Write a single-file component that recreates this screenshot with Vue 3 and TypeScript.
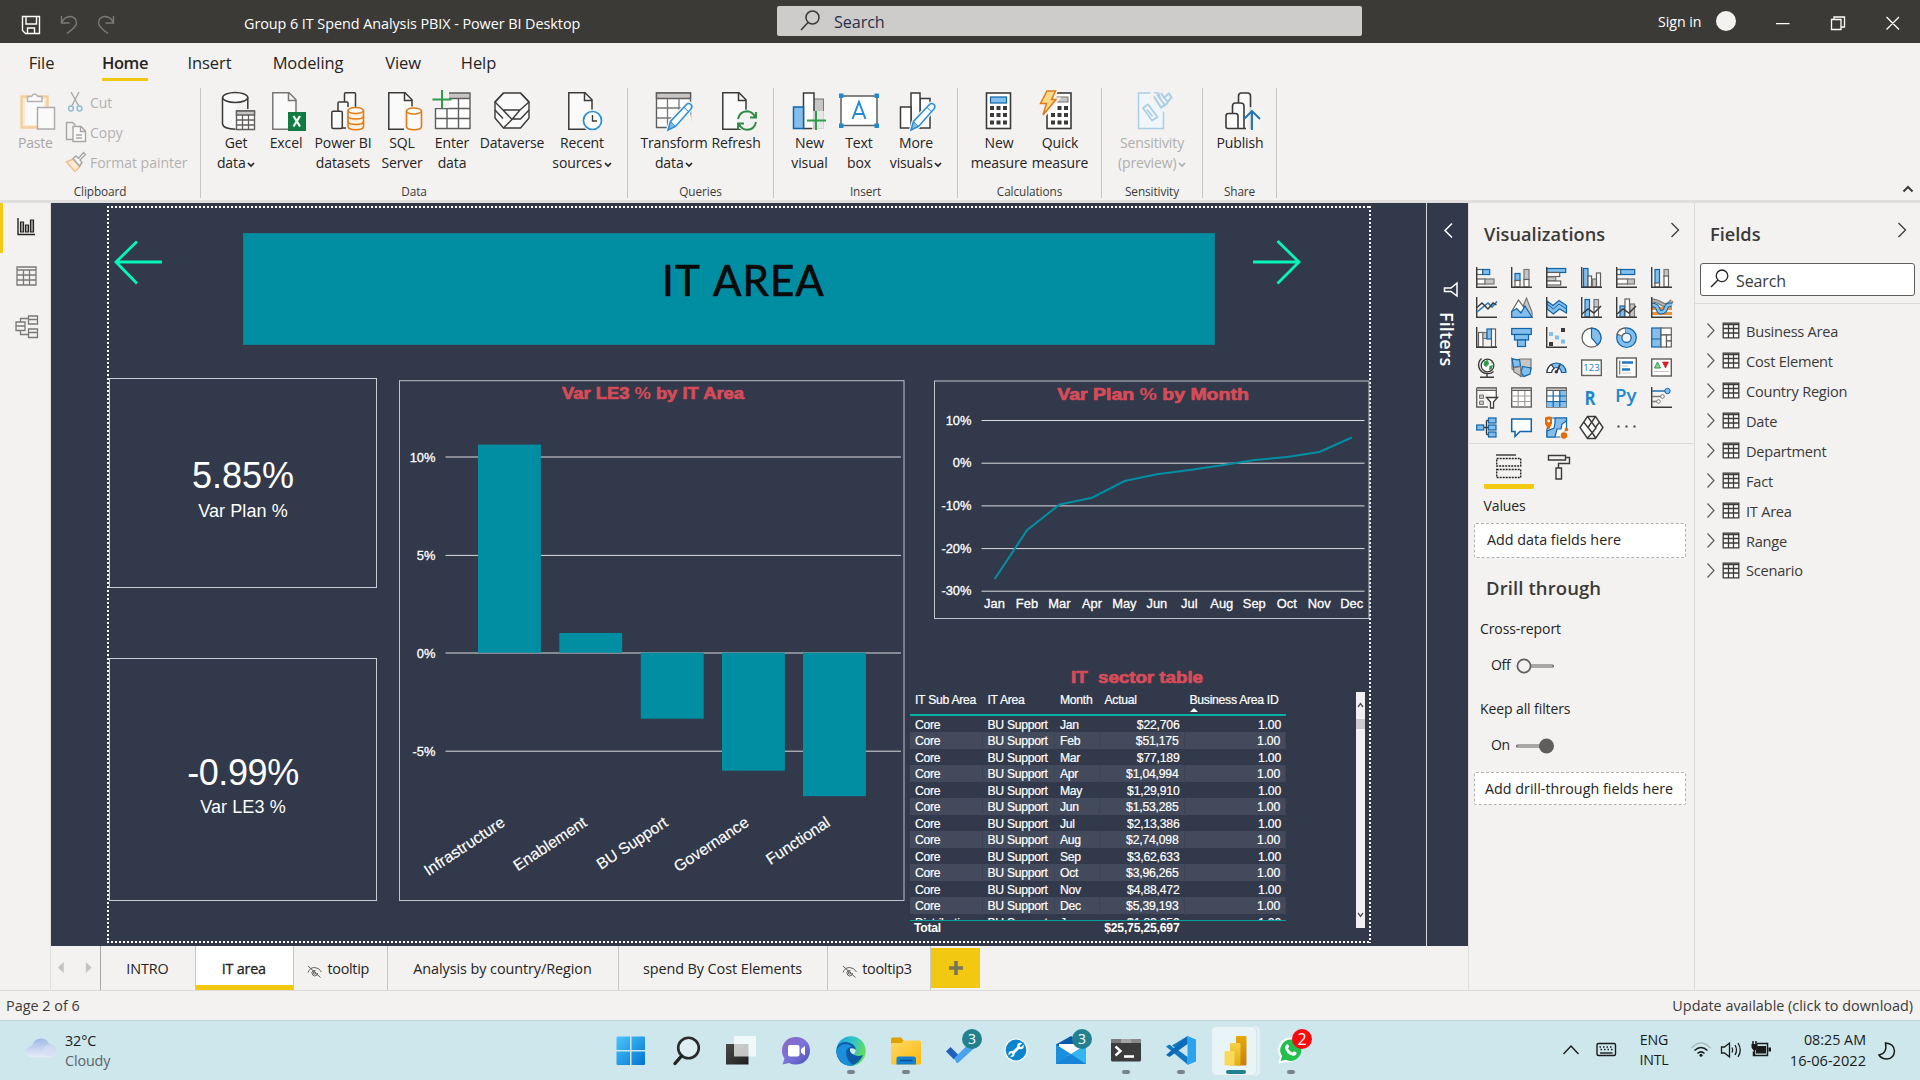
<script setup lang="ts">
interface RibbonButton { icon: string; w: number; lines: string[]; caret?: boolean; off?: boolean }
interface RibbonGroup { name: string; w: number; pad: number; buttons: RibbonButton[] }

const menus = [
  { t: 'File', w: 83, on: false }, { t: 'Home', w: 84, on: true }, { t: 'Insert', w: 85, on: false },
  { t: 'Modeling', w: 112, on: false }, { t: 'View', w: 78, on: false }, { t: 'Help', w: 73, on: false },
]

const groups: RibbonGroup[] = [
  { name: 'Data', w: 427, pad: 10, buttons: [
    { icon: 'getdata', w: 50, lines: ['Get', 'data'], caret: true },
    { icon: 'excel', w: 50, lines: ['Excel'] },
    { icon: 'pbids', w: 64, lines: ['Power BI', 'datasets'] },
    { icon: 'sql', w: 54, lines: ['SQL', 'Server'] },
    { icon: 'enter', w: 46, lines: ['Enter', 'data'] },
    { icon: 'dataverse', w: 74, lines: ['Dataverse'] },
    { icon: 'recent', w: 66, lines: ['Recent', 'sources'], caret: true },
  ] },
  { name: 'Queries', w: 146, pad: 9, buttons: [
    { icon: 'transform', w: 74, lines: ['Transform', 'data'], caret: true },
    { icon: 'refresh', w: 50, lines: ['Refresh'] },
  ] },
  { name: 'Insert', w: 184, pad: 12, buttons: [
    { icon: 'newvisual', w: 47, lines: ['New', 'visual'] },
    { icon: 'textbox', w: 52, lines: ['Text', 'box'] },
    { icon: 'more', w: 62, lines: ['More', 'visuals'], caret: true },
  ] },
  { name: 'Calculations', w: 144, pad: 10, buttons: [
    { icon: 'measure', w: 62, lines: ['New', 'measure'] },
    { icon: 'quick', w: 60, lines: ['Quick', 'measure'] },
  ] },
  { name: 'Sensitivity', w: 101, pad: 10, buttons: [
    { icon: 'sens', w: 80, lines: ['Sensitivity', '(preview)'], caret: true, off: true },
  ] },
  { name: 'Share', w: 74, pad: 12, buttons: [{ icon: 'publish', w: 50, lines: ['Publish'] }] },
]

const page = 'M.8 3.8H17l7 7V40.2H.8Z'
const pencil = '<path d="M12 41l2.5-8.5L30.500 15.500q2-2 4.200-.2 2.200 2.200.4 4.400L19.500 37.500Z" fill="#fff" stroke="#f3f2f1" stroke-width="4"/><path d="M12 41l2.500-8.500L30.500 15.500q2-2 4.200-.2 2.200 2.200.4 4.400L19.500 37.500Z" fill="#fafdff" stroke="#2a8dd4" stroke-width="1.500"/><path d="M12.500 40.300l2.200-7.600 4.600 4.500Z" fill="#83beec" stroke="#2a8dd4"/><path d="M28 18.500l4.500 4" stroke="#2a8dd4"/>'
const ribbonIcons: Record<string, string> = {
  getdata: '<path d="M8.500 9v26q0 5 14 5V9M33.500 9v12" fill="#fafafa" stroke="none"/><path d="M8.500 8.500v26.500q1 5 13 5.200M33.800 8.500V20" stroke="#3b3a39" stroke-width="1.500"/><ellipse cx="21.200" cy="8.500" rx="12.600" ry="5" fill="#fafafa" stroke="#3b3a39" stroke-width="1.500"/><path d="M22.500 22h18v18.500h-18z" fill="#fff" stroke="#605e5c" stroke-width="1.400"/><path d="M22.500 22h18v4h-18z" fill="#c8c6c4" stroke="#605e5c" stroke-width="1.300"/><path d="M28.500 26v14.500M34.500 26v14.500M22.500 31h18M22.500 36h18" stroke="#605e5c" stroke-width="1.300"/>',
  excel: `<g transform="translate(8)"><path d="${page}" fill="#fafafa" stroke="#797775" stroke-width="1.500"/><path d="M16.500 4v7.500H24" stroke="#797775" stroke-width="1.500"/></g><rect x="24" y="23" width="18" height="19" fill="#107c41"/><path d="M29.500 27l6.500 10.500M36 27l-6.500 10.500" stroke="#fff" stroke-width="2.200"/>`,
  pbids: '<g fill="#fafafa" stroke="#3b3a39" stroke-width="1.500"><rect x="23.500" y="3.800" width="11" height="20" rx="1"/><rect x="17" y="13" width="10" height="26" rx="1"/><rect x="10.800" y="22.300" width="10.500" height="17.200" rx="1.500"/></g><rect x="25" y="18" width="19" height="24" fill="#f3f2f1"/><path d="M27 21.500v16q0 3.200 7.800 3.200 7.700 0 7.700-3.200v-16" fill="#fff3e0" stroke="#e07b16" stroke-width="1.600"/><ellipse cx="34.700" cy="21.500" rx="7.700" ry="3" fill="#fff" stroke="#e07b16" stroke-width="1.600"/><path d="M27 27q0 3 7.800 3 7.700 0 7.700-3M27 32.500q0 3 7.800 3 7.700 0 7.700-3" stroke="#e07b16" stroke-width="1.600"/>',
  sql: `<g transform="translate(8)"><path d="${page}" fill="#fafafa" stroke="#3b3a39" stroke-width="1.500"/><path d="M16.500 4v7.500H24" stroke="#3b3a39" stroke-width="1.500"/></g><rect x="24" y="17.500" width="20" height="25" fill="#f3f2f1"/><path d="M26.500 22v15.500q0 3.200 7.500 3.200t7.500-3.200V22" fill="#fafafa" stroke="#e07b16" stroke-width="1.600"/><ellipse cx="34" cy="22" rx="7.500" ry="3" fill="#fff" stroke="#e07b16" stroke-width="1.600"/>`,
  enter: '<path d="M5.500 4h34.500v35.500H5.500z" fill="#fff"/><path d="M17 4h23v5H17z" fill="#c8c6c4"/><path d="M17 4h23v35.500H5.500V18M5.500 19.500H40M5.500 29.500H40M17 20v19M28.500 9v30M17 9.500h23" stroke="#605e5c" stroke-width="1.400"/><path d="M2 2h17v17H2z" fill="#f3f2f1"/><path d="M12 1v18M2.500 10.500h19" stroke="#2e9c48" stroke-width="2"/>',
  dataverse: '<g fill="#fafafa" stroke="#3b3a39" stroke-width="1.400" stroke-linejoin="round"><path d="M13.500 4h17l8.500 9v16l-8.500 10h-17L5 29V13Z"/><path d="M13.500 4L5 13l8 8h17l9-8M13 21l9 9.500-8.500 8.500M5 21l8 8.500M39 21l-8.500 9H22M30 21l-8 9.500M30.500 4L39 13" fill="none"/></g>',
  recent: `<g transform="translate(8)"><path d="${page}" fill="#fafafa" stroke="#3b3a39" stroke-width="1.500"/><path d="M16.500 4v7.500H24" stroke="#3b3a39" stroke-width="1.500"/></g><circle cx="32.500" cy="31.500" r="11" fill="#f3f2f1"/><circle cx="32.500" cy="31.500" r="9" fill="#fff" stroke="#2a8dd4" stroke-width="1.700"/><path d="M32.500 26v6h4.500" stroke="#3b3a39" stroke-width="1.400"/>`,
  transform: '<path d="M4.500 4h34v34.500h-34z" fill="#fff" stroke="#605e5c" stroke-width="1.400"/><path d="M4.500 4h34v5.500h-34z" fill="#c8c6c4" stroke="#605e5c" stroke-width="1.400"/><path d="M15.500 9.500V39M27 9.500V39M4.500 19h34M4.500 29h34" stroke="#797775" stroke-width="1.300"/><path d="M24 36l14-14 3 18H24z" fill="#f3f2f1"/><g transform="translate(4 0)">' + pencil + '</g>',
  refresh: `<g transform="translate(8)"><path d="${page}" fill="#fafafa" stroke="#3b3a39" stroke-width="1.500"/><path d="M16.500 4v7.500H24" stroke="#3b3a39" stroke-width="1.500"/></g><circle cx="33" cy="31.500" r="11" fill="#f3f2f1"/><path d="M24 30q1.500-7.500 9-7.800 5 .2 8 5.300M42 23v5.500h-6M42 33q-1.500 7.500-9 7.800-5-.2-8-5.300M24 40.500V34.500h6" stroke="#2e8b45" stroke-width="1.900"/>`,
  newvisual: '<rect x="25" y="10" width="10.500" height="29.500" fill="#c8c6c4" stroke="#797775"/><rect x="15.500" y="4" width="10.500" height="35.500" fill="#fff" stroke="#3b3a39" stroke-width="1.500"/><rect x="5.500" y="18" width="10" height="21.500" fill="#83beec" stroke="#1064a8" stroke-width="1.500"/><path d="M24 22h12v8h5v11h-17z" fill="#f3f2f1" opacity=".75"/><path d="M28 22v19M19 31.500h19" stroke="#2e9c48" stroke-width="2"/>',
  textbox: '<rect x="4" y="7" width="36" height="29.500" fill="#fff" stroke="#605e5c" stroke-width="1.500"/><g fill="#1e8ad6"><path d="M2 4.500h4.500V9H2zM37.500 4.500H42V9h-4.500zM2 34.500h4.500V39H2zM37.500 34.500H42V39h-4.500z"/></g><path d="M15.500 30L22 13l6.500 17M17.500 25h9" stroke="#1e8ad6" stroke-width="1.900"/>',
  more: '<g fill="#fff" stroke="#3b3a39" stroke-width="1.500"><rect x="26" y="9.500" width="10" height="29.500"/><rect x="17" y="4" width="9" height="35"/><rect x="6.500" y="18" width="10.500" height="21"/></g><g transform="translate(5 0)">' + pencil + '</g>',
  measure: '<rect x="9.500" y="4" width="24" height="35.500" fill="#fff" stroke="#3b3a39" stroke-width="1.600"/><rect x="13.500" y="8" width="16" height="6" fill="#83beec" stroke="#1064a8" stroke-width="1.200"/><g fill="#3b3a39"><path d="M13 17h4v4h-4zM19.500 17h4v4h-4zM26 17h4v4h-4zM13 24h4v4h-4zM19.500 24h4v4h-4zM26 24h4v4h-4zM13 31.500h4v4h-4zM19.500 31.500h4v4h-4zM26 31.500h4v4h-4z"/></g>',
  quick: '<rect x="9" y="4" width="24" height="35.500" fill="#fff" stroke="#3b3a39" stroke-width="1.600"/><rect x="19" y="8" width="11" height="5" fill="#c8c6c4" stroke="#797775"/><g fill="#3b3a39"><path d="M19.500 17h4v4h-4zM26 17h4v4h-4zM13 24h4v4h-4zM19.500 24h4v4h-4zM26 24h4v4h-4zM13 31.500h4v4h-4zM19.500 31.500h4v4h-4zM26 31.500h4v4h-4z"/></g><path d="M8 1.500h10l-4 9h5L5.500 27 9 15H3.500z" fill="#ffd98a" stroke="#f3f2f1" stroke-width="4"/><path d="M9 2h8.500l-4 8.500H18L5 26l3.500-11.500h-6z" fill="#ffd98a" stroke="#e07b16" stroke-width="1.500"/>',
  sens: '<path d="M8.500 4h20l5 14v21.500h-25z" fill="#f0f6fa" stroke="#a9cfe6" stroke-width="1.500"/><path d="M21 2l20 14-6 8-16-14z" fill="#f3f2f1"/><path d="M27 5.500l8.500 11.500M24 7.500l7 11 7-4.500M31 4l3 4.500 5-4 2.500 4-4 4.500M34 8l4 5.500" stroke="#a9cfe6" stroke-width="2"/><path d="M13 19l5-3.500 9.500 12.500-5.500 3.500zM17 20.500l5.500 7" stroke="#a9cfe6" stroke-width="1.700"/>',
  publish: '<g fill="#fafafa" stroke="#3b3a39" stroke-width="1.600"><path d="M20.500 40V7q0-3 3-3h6q3 0 3 3v33"/><path d="M14.500 40V17q0-3 3-3h5q3.500 0 3.500 3v23"/><path d="M8 27q0-2.500 2.500-2.500h7q2.500 0 2.500 2.500v12.500H10Q8 39.500 8 37.500zM20 39.500h8"/></g><path d="M28 18h16v24H29z" fill="#f3f2f1" opacity=".8"/><path d="M34 41V22.500M26 30l8-8 8 8" stroke="#2070b0" stroke-width="1.900"/>',
}

const ax = '<path d="M.7 0V20.300H21" stroke="#3b3a39" stroke-width="1.400"/>'
const b = 'fill="#83beec" stroke="#1064a8" stroke-width="1.200"'
const g = 'fill="#c8c6c4" stroke="#797775" stroke-width="1.200"'
const w = 'fill="#fff" stroke="#605e5c" stroke-width="1.200"'
const fr = '<rect x=".7" y="1" width="19.600" height="19" fill="#fff" stroke="#605e5c" stroke-width="1.400"/>'
const vizIcons: string[] = [
  `<rect x=".7" y="2.500" width="6" height="5" ${w}/><rect x="6.700" y="2.500" width="7" height="5" ${b}/><rect x=".7" y="12" width="8.500" height="5" ${w}/><rect x="9" y="12" width="9" height="5" ${g}/>` + ax,
  `<rect x="4" y="6.500" width="5" height="7" ${b}/><rect x="4" y="13.500" width="5" height="6.500" ${w}/><rect x="13" y="2.500" width="5" height="10" ${g}/><rect x="13" y="12.500" width="5" height="7.500" ${w}/>` + ax,
  `<rect x=".7" y="1.500" width="19" height="4" ${b}/><rect x=".7" y="5.500" width="13" height="4" ${w}/><rect x=".7" y="10" width="9" height="4" ${g}/><rect x=".7" y="14" width="14" height="4" ${w}/>` + ax,
  `<rect x="2.500" y="1.500" width="4.500" height="18.500" ${b}/><rect x="7" y="9" width="3.500" height="11" ${w}/><rect x="11.500" y="12" width="4" height="8" ${g}/><rect x="15.500" y="6" width="4" height="14" ${w}/>` + ax,
  `<rect x=".7" y="2.500" width="4" height="5" ${w}/><rect x="4.700" y="2.500" width="14" height="5" ${b}/><rect x=".7" y="12" width="11" height="5" ${w}/><rect x="11.500" y="12" width="7" height="5" ${g}/>` + ax,
  `<rect x="4" y="2.500" width="4.500" height="14" ${b}/><rect x="4" y="16" width="4.500" height="4" ${w}/><rect x="13" y="2.500" width="4.500" height="7" ${g}/><rect x="13" y="9" width="4.500" height="11" ${w}/>` + ax,
  ax + '<path d="M1 15L12 6l4 4 5-5.500" stroke="#1e78c2" stroke-width="1.600"/><path d="M1 10.500L6 6l6 6 5-6 3.500 2" stroke="#3b3a39" stroke-width="1.400"/>',
  `<path d="M10 14l5.500-13 5.500 14v5z" ${g}/><path d="M1 14L7.500 3l7 9.500L1 20z" ${w}/><path d="M.7 20.300V14.500l5-3L10 16l4-7 7 11.300Z" ${b}/>`,
  `<path d="M1 4l6 4.500 6-5 7.500 5V16l-7-4-6 5-6.500-5Z" ${b}/><path d="M1 7l6.500 5L13 7l7.500 5" stroke="#1064a8"/>` + ax,
  `<rect x="4" y="2.500" width="4.500" height="17.500" ${b}/><rect x="13" y="2.500" width="4.500" height="8" ${g}/><rect x="13" y="10" width="4.500" height="10" ${w}/>` + ax + '<path d="M1 17l6-5 6 4 7-7" stroke="#3b3a39" stroke-width="1.500"/>',
  `<rect x="4" y="9" width="4.500" height="11" ${b}/><rect x="9" y="2" width="4.500" height="18" ${w}/><rect x="14" y="7" width="4.500" height="13" ${g}/>` + ax + '<path d="M1 17l6-5 6 4 7-7" stroke="#3b3a39" stroke-width="1.500"/>',
  '<path d="M1 11.500h20M1 16.500h20" stroke="#e8913a" stroke-width="3"/><path d="M1 3.500q5 0 10 3.500t10-3.500" stroke="#797775" stroke-width="4"/><path d="M1 3.500q5 0 10 3.500t10-3.500" stroke="#b5b3b1" stroke-width="2"/><path d="M1 8q5 0 6 4t4 3q3 0 4-4t6-3" stroke="#1064a8" stroke-width="4.600"/><path d="M1 8q5 0 6 4t4 3q3 0 4-4t6-3" stroke="#83beec" stroke-width="2.600"/>' + ax,
  `<rect x="2.500" y="5.500" width="4.500" height="14.500" ${w}/><rect x="7" y="5.500" width="4" height="6" ${g}/><rect x="11" y="2" width="4.500" height="10" ${b}/><rect x="15.500" y="2" width="4" height="18" ${w}/>` + ax,
  `<rect x=".7" y="1.500" width="19.600" height="6" ${b}/><rect x="3.500" y="7.500" width="14" height="5.500" ${b}/><rect x="6.500" y="13" width="8" height="6.500" ${b}/>`,
  ax + '<path d="M15 1h4v4h-4zM3 15h4v4H3z" fill="#3b3a39"/><path d="M3 5h4v4H3zM9 8.500h4v4H9zM15 12.500h4v4h-4z" fill="#83beec"/>',
  `<circle cx="10.500" cy="10.700" r="9.500" ${w}/><path d="M10.500 1.200A9.500 9.500 0 0 1 16.500 18L10.500 10.700Z" ${b}/>`,
  `<circle cx="10.500" cy="10.700" r="7.200" stroke="#1064a8" stroke-width="6.400"/><circle cx="10.500" cy="10.700" r="7.200" stroke="#83beec" stroke-width="4"/><path d="M3.300 8.500A7.200 7.200 0 0 1 9.500 3.500" stroke="#605e5c" stroke-width="6.400"/><path d="M3.600 7.500A7.200 7.200 0 0 1 9 3.700" stroke="#fff" stroke-width="4"/>`,
  `<rect x=".7" y="1" width="9.300" height="19" ${b}/><path d="M.7 12H10" stroke="#1064a8"/><rect x="10" y="1" width="10.300" height="7" ${w}/><rect x="10" y="8" width="5.500" height="12" ${w}/><rect x="15.500" y="8" width="4.800" height="6" ${w}/><rect x="15.500" y="14" width="4.800" height="6" ${w}/>`,
  '<circle cx="11.500" cy="8.500" r="6.300" fill="#fff" stroke="#3b3a39" stroke-width="1.300"/><path d="M8 4.500l4-1.500 1 4-3 3-2.500-2zM13.500 9l3.500-1-1.500 4.500-2.500.5zM15 4l2 2-1.500.5z" fill="#2e9c48"/><path d="M5.500 1.500Q1.500 5 3 10.500t8 6q4 .5 6.500-2M11 16.500v3.500M4 20.300h14" stroke="#3b3a39" stroke-width="1.400"/>',
  `<path d="M1 1.500q4 2 8.500.5L20 2v10l-6 6.500-4 1L1 12Z" ${g}/><path d="M1 1.500q4 2 7.500 1L9.500 9 2.500 10.500ZM11.500 9.500l8.500 1.500-1 6-6 2.500-3-4z" ${b}/><path d="M2.500 11l7-1.500L10 19 3 15z" ${g}/>`,
  '<path d="M1 15.500A9.500 9.500 0 0 1 20 15.500h-4.500a5 5 0 0 0-10 0Z" fill="#83beec" stroke="#1064a8" stroke-width="1.200"/><path d="M1 15.500A9.500 9.500 0 0 1 5.500 7.500L8 11.500a5 5 0 0 0-2.500 4Z" fill="#fff" stroke="#3b3a39" stroke-width="1.200"/><path d="M10.500 15.500L14 7.500" stroke="#3b3a39" stroke-width="1.800"/><circle cx="10.300" cy="14.800" r="1.700" fill="#3b3a39"/>',
  '<rect x=".7" y="3" width="19.600" height="15.500" fill="#fff" stroke="#605e5c" stroke-width="1.400"/><text x="10.500" y="14.200" text-anchor="middle" font-family="Open Sans" font-size="9.500" fill="#1e78c2">123</text>',
  fr + '<path d="M3.700 3.500v14" stroke="#797775" stroke-width="1.200"/><path d="M6 5.500h11M6 12.500h8" stroke="#1e78c2" stroke-width="2.400"/><path d="M6 9h6M6 16h9" stroke="#c8c6c4"/>',
  '<rect x=".7" y="2" width="19.600" height="17" fill="#fff" stroke="#605e5c" stroke-width="1.400"/><path d="M3.500 11L6.500 5l3 6z" fill="#8fd19c" stroke="#2e9c48"/><path d="M11.500 5h6l-3 6z" fill="#e02020" stroke="#b01010" stroke-width=".6"/><path d="M3 14.500h15" stroke="#c8c6c4"/>',
  '<path d="M.7 1h19.600v10M12 20H.7V1" fill="#fff" stroke="#605e5c" stroke-width="1.400"/><path d="M.7 1h19.600v2.500H.7z" fill="#c8c6c4" stroke="#605e5c"/><path d="M3.500 8h4v3.500h-4zM3.500 14h4v3.500h-4z" fill="#c8c6c4" stroke="#797775"/><path d="M10.500 10.500h11L17.500 15v6h-3v-6z" fill="#fff" stroke="#3b3a39" stroke-width="1.300"/>',
  fr + '<path d="M.7 1h19.600v2.500H.7z" fill="#c8c6c4" stroke="#605e5c"/><path d="M.7 9h19.600M.7 14.500h19.600M7.200 4v16M13.800 4v16" stroke="#a19f9d" stroke-width="1.200"/>',
  fr + '<path d="M13.800 4h6.500v16H.7v-5.500h13.100z" fill="#83beec"/><path d="M.7 1h19.600v2.500H.7z" fill="#c8c6c4" stroke="#605e5c"/><path d="M.7 9h19.600M.7 14.500h19.600M7.200 4v16M13.800 4v16" stroke="#1064a8" stroke-width="1.200"/>',
  '<text x="9" y="17.500" text-anchor="middle" font-family="Open Sans" font-weight="700" font-size="19" fill="#1e88cc" textLength="11" lengthAdjust="spacingAndGlyphs">R</text>',
  '<text x="9.800" y="15" text-anchor="middle" font-family="Open Sans" font-weight="600" font-size="18.500" fill="#1e88cc" textLength="21.500" lengthAdjust="spacingAndGlyphs">Py</text>',
  ax + '<path d="M1 4h13" stroke="#1064a8" stroke-width="1.400"/><circle cx="16.500" cy="4" r="2.700" fill="#83beec" stroke="#1064a8"/><path d="M1 9.500h9M1 14.500h5" stroke="#797775" stroke-width="1.300"/><circle cx="11.500" cy="9.500" r="1.800" fill="#fff" stroke="#797775"/><circle cx="7.500" cy="14.500" r="1.800" fill="#fff" stroke="#797775"/>',
  `<path d="M8 10.500h5M10.500 3.500v14M10.500 3.500H13M10.500 17.500H13" stroke="#3b3a39" stroke-width="1.400"/><rect x=".7" y="8" width="7" height="5" ${b}/><rect x="12.500" y="1" width="7.500" height="5" ${b}/><rect x="12.500" y="8" width="7.500" height="5" ${b}/><rect x="12.500" y="15" width="7.500" height="5" ${b}/>`,
  '<path d="M.7 2h19.600v12.500H9L4 19.500v-5H.7Z" fill="#fff" stroke="#1064a8" stroke-width="1.500"/>',
  `<path d="M5 1h15.500v12q-3 1-4 7H1v-8Z" fill="#fff" stroke="#1064a8" stroke-width="1.200"/><path d="M9 1h11.500v3L16 7l-1 5H11l-2 8H1v-6l7-3 1-5z" ${b}/><path d="M-1 .5q4.500-2 7 0v6L3 13-1 7z" fill="#e06c0a"/><circle cx="2.700" cy="4" r="1.400" fill="#fff"/><circle cx="18" cy="18.500" r="4.200" fill="#f3f2f1"/><circle cx="18" cy="18.500" r="3.200" fill="#e06c0a"/><circle cx="20.500" cy="12.500" r="1.800" fill="#e06c0a"/>`,
  '<path d="M6.500-.5h8L22 10.500l-7.500 11h-8L-1 10.500ZM6.500-.5L15 11l-4 5-4.500 5M14.500-.5L7 10.500l4 5 4 6M3 5.500l4 5M18.500 5l-4 5.500" fill="#fff" fill-opacity=".6" stroke="#3b3a39" stroke-width="1.400"/>',
  '<path d="M1.500 8.500h2v2h-2zM9.500 8.500h2v2h-2zM17.500 8.500h2v2h-2z" fill="#3b3a39"/>',
]

const yBar = [{ t: '10%', y: 457 }, { t: '5%', y: 555.4 }, { t: '0%', y: 653 }, { t: '-5%', y: 751.2 }]
const bars = [
  { t: 'Infrastructure', x: 478, y: 444.6, h: 208.1, e: 506 }, { t: 'Enablement', x: 559.3, y: 633, h: 19.7, e: 588 },
  { t: 'BU Support', x: 640.8, y: 652.7, h: 66, e: 669 }, { t: 'Governance', x: 722, y: 652.7, h: 118, e: 750 },
  { t: 'Functional', x: 803, y: 652.7, h: 143.5, e: 831.3 },
]
const yLine = [{ t: '10%', y: 420.5 }, { t: '0%', y: 463.2 }, { t: '-10%', y: 505.9 }, { t: '-20%', y: 548.6 }, { t: '-30%', y: 591.2 }]
const months = ['Jan', 'Feb', 'Mar', 'Apr', 'May', 'Jun', 'Jul', 'Aug', 'Sep', 'Oct', 'Nov', 'Dec']
const lineY = [579, 530, 504.5, 497.7, 481, 474.3, 470, 465.3, 460, 457, 452, 437.5]
const linePts = lineY.map((y, i) => `${994.7 + i * 32.47},${y}`).join(' ')
const actual = ['$22,706', '$51,175', '$77,189', '$1,04,994', '$1,29,910', '$1,53,285', '$2,13,386', '$2,74,098', '$3,62,633', '$3,96,265', '$4,88,472', '$5,39,193', '$1,83,059']
const rows = actual.map((a, i) => ({ sub: i === 12 ? 'Distribution' : 'Core', m: months[i % 12], a, id: '1.00' }))

const tabs = [
  { t: 'INTRO', w: 95, hid: false, on: false }, { t: 'IT area', w: 97.5, hid: false, on: true }, { t: 'tooltip', w: 94.5, hid: true, on: false },
  { t: 'Analysis by country/Region', w: 231, hid: false, on: false }, { t: 'spend By Cost Elements', w: 209, hid: false, on: false }, { t: 'tooltip3', w: 103, hid: true, on: false },
]
const fields = ['Business Area', 'Cost Element', 'Country Region', 'Date', 'Department', 'Fact', 'IT Area', 'Range', 'Scenario']

const apps: { svg: string; dot?: boolean; badge?: string; red?: boolean; on?: boolean }[] = [
  { svg: '<g fill="url(#gw)"><path d="M.5 1.500a1 1 0 0 1 1-1H14V14H.5zM15.500.5H28a1 1 0 0 1 1 1V14H15.500zM.5 15.500H14V29H1.500a1 1 0 0 1-1-1zM15.500 15.500H29V28a1 1 0 0 1-1 1H15.500z"/></g>' },
  { svg: '<circle cx="17.500" cy="12" r="10.300" stroke="#2b2b2b" stroke-width="2.600" fill="#ddeff3"/><path d="M10.500 20L4 27.500" stroke="#222" stroke-width="3.400" stroke-linecap="round"/>' },
  { svg: '<rect x="0" y="8" width="22.500" height="20.500" fill="url(#gk)"/><rect x="8" y="0" width="22" height="20.500" fill="#fff" opacity=".72"/>' },
  { svg: '<path d="M15 1C6.500 1 1 7 1 14.500c0 3.500 1.200 6 2.500 8L1.500 28.500 8 27q3 1.500 7 1.500c8 0 14-6 14-14S23 1 15 1Z" fill="url(#gc)"/><rect x="7" y="9" width="11.500" height="11.500" rx="2" fill="#fff"/><path d="M20 13l4-3v9.500l-4-3z" fill="#fff"/>' },
  { svg: '<circle cx="15" cy="15" r="14.700" fill="url(#ge1)"/><path d="M.5 14.500Q1 6 10 6q9 1 10 8 0 3-2.500 4.500 3.500 2.500 9.500.5Q23 28 15 29.700 1 29 .5 14.500Z" fill="#0c59a4"/><path d="M.3 15Q3 7.500 11 8q4 1 5 3-5 0-6 5 0 9 8 13.400-4 1-8-.5Q1 25 .3 15Z" fill="#1a90dc"/><path d="M14 12.500q4-1 6 1.500 0 3-2.500 4.500-4-1.500-3.500-6z" fill="#cfe9ee"/>', dot: true },
  { svg: '<path d="M0 3q0-1.500 1.500-1.500H10l3 3.500v6H0z" fill="#e0a100"/><path d="M0 8q0-1 1-1h9l3-2.500h15.500q1.500 0 1.500 1.500v21q0 1.500-1.500 1.500H1.500Q0 28.500 0 27z" fill="url(#gf)"/><path d="M5.500 28.500V23q0-2.500 2.500-2.500h14.500q2.500 0 2.500 2.500v5.500z" fill="#1480d0"/><path d="M9 24.500h12.500" stroke="#0b4f8c" stroke-width="1.500"/>', dot: true },
  { svg: '<path d="M0 15.500L4.500 11l8 8-4.500 4.500z" fill="#1f5fbf"/><path d="M8 22.500L24 6.500l5 5-16.500 15q-1 1-2 0z" fill="#4aa3ef"/>', badge: '3' },
  { svg: '<circle cx="15" cy="14" r="11.500" fill="#fff"/><circle cx="15" cy="14" r="10.400" fill="#0a84cc"/><path d="M10.500 18.500L19.500 9.500" stroke="#fff" stroke-width="3"/><circle cx="10.500" cy="18" r="3" fill="#fff"/><circle cx="19.500" cy="10" r="3.300" fill="#fff"/><path d="M19 10.500L23 7M11 17.500L7.500 21" stroke="#0a84cc" stroke-width="2"/>' },
  { svg: '<path d="M0 8.500L15 0l15 8.500V28H0z" fill="#0a5aa8"/><path d="M3 8h24v12H3z" fill="#fff"/><path d="M0 8.500l15 9.500L0 28z" fill="#1a8fe0"/><path d="M30 8.500V28H0l15-10z" fill="#35b4f2"/><path d="M0 28l15-10 15 10z" fill="#1685d8"/>', badge: '3' },
  { svg: '<rect x="0" y="3" width="30" height="22.500" rx="1.500" fill="#3c3c3c"/><path d="M0 7V4.500Q0 3 1.500 3H10v4z" fill="#7a7a7a"/><path d="M10 3h10v4H10z" fill="#a5a5a5"/><path d="M20 3h8.500Q30 3 30 4.500V7H20z" fill="#8a8a8a"/><path d="M4.500 10.500l5 4.500-5 4.500" stroke="#fff" stroke-width="2.400"/><path d="M13 20.500h10" stroke="#fff" stroke-width="2.600"/>', dot: true },
  { svg: '<path d="M21.500 0L30 3.500v22L21.500 29z" fill="#2ba3ee"/><path d="M21.500 0L9 13 3.500 8.500 0 10.500l21.500 18V21L6 9.500z" fill="#1079c4"/><path d="M21.500 8L3.500 21 0 19 21.500 0z" fill="#0d6ab4"/>', dot: true },
  { svg: '<rect x="15" y="0" width="10.500" height="29.500" rx="1" fill="url(#gp1)"/><path d="M9 8q0-1 1-1h8.500q1 0 1 1v21.500H9z" fill="url(#gp2)"/><path d="M3.500 16q0-1 1-1h8q1 0 1 1v13.500h-9q-1 0-1-1z" fill="#f7d95c"/>', on: true },
  { svg: '<path d="M15 1.500A12.500 12.500 0 0 0 4 20.500L2.500 27.500 9.500 26A12.500 12.500 0 1 0 15 1.500Z" fill="#fff"/><path d="M15 3.500A10.700 10.700 0 0 0 6 20L4.700 25l5-1.300A10.700 10.700 0 1 0 15 3.500Z" fill="#22bf4f"/><path d="M10.500 8.500q1.500-1 2.500 1.500 0 1.500-1 2.500 1.500 3 4.500 4.200l1.500-1.500q3 1 2.700 2.200-1 2.800-4 2.300Q10 18 9 11.500q0-2 1.500-3Z" fill="#fff"/>', dot: true, badge: '2', red: true },
]
</script>

<template>
  <div class="desk">
    <header class="titlebar">
      <svg class="quick" width="110" height="43" viewBox="0 0 110 43" fill="none">
        <path d="M22.500 16.500h17v17h-14l-3-3zM26 16.500v7.500h10.500v-7.500M27.500 33.500v-5.500h7v5.500" stroke="#fff" stroke-width="1.400" />
        <path d="M61.500 16v7h8M61.500 23q3-7 9.500-6.500 5.500 1 5.500 7-1 4-9.500 10" stroke="#7c7a78" stroke-width="1.400" />
        <path d="M113.500 16v7h-8M113.500 23q-3-7-9.500-6.500-5.500 1-5.500 7 1 4 9.500 10" stroke="#7c7a78" stroke-width="1.400" />
      </svg>
      <div class="doc">Group 6 IT Spend Analysis PBIX - Power BI Desktop</div>
      <div class="tsearch">
        <svg width="20" height="22" viewBox="0 0 20 22" fill="none"><circle cx="12.500" cy="7.500" r="6.500" stroke="#3b3a39" stroke-width="1.500" /><path d="M8 12.500L1 20" stroke="#3b3a39" stroke-width="1.600" /></svg>
        <span>Search</span>
      </div>
      <div class="signin">Sign in</div>
      <div class="avatar"></div>
      <svg class="winctl" width="140" height="43" viewBox="1770 0 140 43" fill="none" stroke="#fff" stroke-width="1.300">
        <path d="M1776 23.700h13.500M1886.500 17l12.500 12.500M1899 17l-12.500 12.500M1831.500 19.500h9.500v10h-9.500zM1834 19.500v-2.500h10.500v10H1841" />
      </svg>
    </header>

    <section class="ribbon">
      <nav class="menus">
        <div v-for="m in menus" :key="m.t" class="menu" :class="{ on: m.on }" :style="{ width: m.w + 'px' }"><span>{{ m.t }}</span></div>
      </nav>
      <div class="groups">
        <div class="group clip">
          <div class="gbody">
            <div class="paste">
              <svg width="38" height="42" viewBox="0 0 38 42" fill="none">
                <rect x="2.500" y="7.500" width="26" height="31" fill="#fbe9d2" stroke="#f2cf9c" stroke-width="2.400" />
                <rect x="6" y="10" width="19" height="26" fill="#fafafa" />
                <path d="M8.500 12.500v-5h4q3-5 6.500 0h4v5z" fill="#fafafa" stroke="#b5b3b1" stroke-width="1.500" />
                <rect x="18.500" y="18.500" width="17" height="21.500" fill="#fafafa" stroke="#aeacaa" stroke-width="1.500" />
              </svg>
              <span>Paste</span>
            </div>
            <div class="cliplist">
              <div><svg width="22" height="22" viewBox="0 0 22 22" fill="none"><path d="M6 1l8 14.500M14 1L6.500 15.500" stroke="#a8a6a4" stroke-width="1.300" /><circle cx="6" cy="17.500" r="2.400" stroke="#8fbcd8" stroke-width="1.500" /><circle cx="14.500" cy="17.500" r="2.400" stroke="#8fbcd8" stroke-width="1.500" /></svg>Cut</div>
              <div><svg width="22" height="22" viewBox="0 0 22 22" fill="none" stroke="#a8a6a4" stroke-width="1.400"><path d="M8 18.500H1.500v-17h6l3 3" /><path d="M8 5.500h8l4.500 4.500v10.500H8zM15.500 6v4.500h5M11 14h6M11 17h6" fill="#fafafa" /></svg>Copy</div>
              <div><svg width="22" height="22" viewBox="0 0 22 22" fill="none"><path d="M1.500 11l6.500-3 7 7.500L10 20.500z" fill="#fbe9d2" stroke="#ecc08a" stroke-width="1.500" /><path d="M8 7.500l3-2.500 2.500 2.500 5-6 2 2-5.500 5.500 2 2.500-2.500 3.500z" fill="#fafafa" stroke="#a8a6a4" stroke-width="1.400" /></svg>Format painter</div>
            </div>
          </div>
          <div class="gname">Clipboard</div>
        </div>
        <div v-for="gr in groups" :key="gr.name" class="group" :style="{ width: gr.w + 'px' }">
          <div class="gbody" :style="{ paddingLeft: gr.pad + 'px' }">
            <div v-for="bt in gr.buttons" :key="bt.icon" class="rbtn" :class="{ off: bt.off }" :style="{ width: bt.w + 'px' }">
              <svg width="44" height="42" viewBox="0 0 44 42" fill="none" v-html="ribbonIcons[bt.icon]"></svg>
              <div v-for="(l, i) in bt.lines" :key="l" class="rl">{{ l }}<svg v-if="bt.caret && i === 1" class="caret" width="8" height="6" viewBox="0 0 8 6" fill="none"><path d="M1 1l3 3 3-3" stroke="currentColor" stroke-width="1.700" /></svg></div>
            </div>
          </div>
          <div class="gname">{{ gr.name }}</div>
        </div>
        <svg class="collapse" width="12" height="8" viewBox="0 0 12 8" fill="none"><path d="M1.500 6.500L6 2l4.500 4.500" stroke="#3b3a39" stroke-width="2" /></svg>
      </div>
    </section>

    <main class="work">
      <aside class="rail">
        <svg width="50" height="150" viewBox="0 203 50 150" fill="none">
          <path d="M0 203h3v50H0z" fill="#f2c811" />
          <path d="M18 218v16.500h17" stroke="#252423" stroke-width="1.400" /><path d="M20.500 222h3v10h-3zM25.500 225h3v7h-3zM30.500 220h3v12h-3z" stroke="#252423" fill="#a19f9d" stroke-width="1.200" />
          <path d="M17 267h19v18H17zM17 270h19M17 275h19M17 280h19M23.500 270v15M29.500 270v15" stroke="#7a7876" stroke-width="1.300" />
          <path d="M16 322h9v8.500h-9zM16 326h9M28.500 316h9v8h-9zM28.500 319.500h9M28.500 329h9v8.500h-9zM28.500 332.500h9M20.500 322v-3.500h8M20.500 330.500v4h8" stroke="#7a7876" stroke-width="1.300" />
        </svg>
      </aside>
      <div class="center">
        <div class="canvas">
          <div class="sheet"></div>
          <svg class="nav left" width="50" height="50" viewBox="0 0 50 50" fill="none"><path d="M49 25H3M24 4.500L3 25l21 21.500" stroke="#05f5b8" stroke-width="2.800" /></svg>
          <svg class="nav right" width="50" height="50" viewBox="0 0 50 50" fill="none"><path d="M1 25H47M25.500 4L47 25 25.500 46.500" stroke="#05f5b8" stroke-width="2.800" /></svg>
          <div class="banner">IT AREA</div>
          <div class="card c1"><b>5.85%</b><span>Var Plan %</span></div>
          <div class="card c2"><b>-0.99%</b><span>Var LE3 %</span></div>
          <svg class="barv" width="507" height="522" viewBox="399 380 507 522">
            <rect x="399.500" y="380.700" width="504.500" height="519.800" class="frame" />
            <text x="562" y="398.500" class="vt" textLength="182" lengthAdjust="spacingAndGlyphs">Var LE3 <tspan class="pc">%</tspan> by IT Area</text>
            <g v-for="a in yBar" :key="a.t"><path :d="`M445.500 ${a.y}H901`" class="grid" /><text x="435.500" :y="a.y + 4.500" text-anchor="end" class="ax">{{ a.t }}</text></g>
            <g v-for="r in bars" :key="r.t"><rect :x="r.x" :y="r.y" width="62.900" :height="r.h" fill="#018ea3" /><text text-anchor="end" class="cat" :transform="`translate(${r.e} 825) rotate(-33.500)`">{{ r.t }}</text></g>
          </svg>
          <svg class="linev" width="437" height="240" viewBox="934 380 437 240">
            <rect x="934.500" y="381" width="434.500" height="237.500" class="frame" />
            <text x="1057.300" y="400" class="vt" textLength="191.500" lengthAdjust="spacingAndGlyphs">Var Plan <tspan class="pc">%</tspan> by Month</text>
            <g v-for="a in yLine" :key="a.t"><path :d="`M981.500 ${a.y}H1364.500`" class="grid" /><text x="971.500" :y="a.y + 4" text-anchor="end" class="ax">{{ a.t }}</text></g>
            <polyline :points="linePts" fill="none" stroke="#018ea3" stroke-width="2" />
            <text v-for="(m, i) in months" :key="m" :x="994.5 + i * 32.47" y="607.700" text-anchor="middle" class="ax">{{ m }}</text>
          </svg>
          <div class="tablev">
            <svg class="ttitle" width="140" height="20" viewBox="0 0 140 20"><text x="1" y="16" class="vt" textLength="132" lengthAdjust="spacingAndGlyphs">IT&nbsp; sector table</text></svg>
            <div class="tr th"><span>IT Sub Area</span><span>IT Area</span><span>Month</span><span>Actual</span><span>Business Area ID<i></i></span></div>
            <div class="tbody">
              <div v-for="(r, i) in rows" :key="i" class="tr" :class="{ alt: i % 2 === 1 }"><span>{{ r.sub }}</span><span>BU Support</span><span>{{ r.m }}</span><span class="n">{{ r.a }}</span><span class="n">{{ r.id }}</span></div>
            </div>
            <div class="tr total"><span>Total</span><span></span><span></span><span class="n">$25,75,25,697</span><span></span></div>
          </div>
          <svg class="scroll" width="9" height="236" viewBox="0 0 9 236" fill="none"><rect width="9" height="236" fill="#f1f1f1" /><rect y="27" width="9" height="10" fill="#cdcdcd" /><path d="M2 15l2.500-3.500L7 15M2 221l2.500 3.500L7 221" stroke="#505050" stroke-width="1.300" /></svg>
          <div class="filters">
            <svg width="42" height="100" viewBox="1427 203 42 100" fill="none" stroke="#fff" stroke-width="1.500"><path d="M1452 223.500l-7 7 7 7" /><path d="M1457 283v13l-6-4.500h-6.500v-3.500h6.500z" /></svg>
            <span>Filters</span>
          </div>
        </div>
        <div class="tabs">
          <svg class="tabnav" width="50" height="44" viewBox="51 946 50 44"><path d="M64 962v11l-6-5.500zM86.500 962v11l6-5.500z" fill="#c5c3c1" /></svg>
          <div v-for="t in tabs" :key="t.t" class="tab" :class="{ on: t.on, hid: t.hid }" :style="{ width: t.w + 'px' }">
            <svg v-if="t.hid" width="15" height="13" viewBox="0 0 15 13" fill="none" stroke="#605e5c"><path d="M1 7.500Q3 2.500 7.500 2.500T14.500 7M1 1l12.500 11.500M4.500 8q1-3 4-2.500M10.500 8q0 3-3 3-2.500-.5-2.500-3" /><circle cx="7.500" cy="8" r="1.200" /></svg>
            <span>{{ t.t }}</span>
          </div>
          <div class="plus"><svg width="14" height="14" viewBox="0 0 14 14"><path d="M7 0v14M0 7h14" stroke="#7b7558" stroke-width="3.600" /></svg></div>
        </div>
      </div>
      <aside class="viz">
        <div class="phead"><h2>Visualizations</h2><svg width="10" height="16" viewBox="0 0 10 16" fill="none"><path d="M1.500 1l7 7-7 7" stroke="#3b3a39" stroke-width="1.300" /></svg></div>
        <div class="vgrid"><svg v-for="(v, i) in vizIcons" :key="i" width="21" height="21" viewBox="0 0 21 21" fill="none" v-html="v"></svg></div>
        <div class="vtabs">
          <div class="vtab on"><svg width="26" height="26" viewBox="0 0 26 26" fill="none" stroke="#252423"><path d="M0 1h20" stroke-width="1.300" /><path d="M.7 4.500h24v7.500H.7zM.7 15.500h24v8H.7z" stroke-width="1.400" stroke-dasharray="2 1" /></svg></div>
          <div class="vtab"><svg width="26" height="26" viewBox="0 0 26 26" fill="none" stroke="#3b3a39" stroke-width="1.400"><path d="M1.500 1.500h17v4.500h-17zM18.500 3.500h4v6H11.500v4M9 14h5.500v11H9z" /></svg></div>
        </div>
        <p class="lab values">Values</p>
        <div class="well w1">Add data fields here</div>
        <h2 class="drill">Drill through</h2>
        <p class="lab cross">Cross-report</p>
        <div class="tog t1"><span>Off</span><svg width="38" height="16" viewBox="0 0 38 16" fill="none"><path d="M15 8h21.500" stroke="#605e5c" stroke-width="3" stroke-linecap="round" /><path d="M15 8h21.500" stroke="#f3f2f1" stroke-width="1" /><circle cx="8" cy="8" r="6.600" stroke="#605e5c" stroke-width="1.700" fill="#f3f2f1" /></svg></div>
        <p class="lab keep">Keep all filters</p>
        <div class="tog t2"><span>On</span><svg width="38" height="16" viewBox="0 0 38 16" fill="none"><path d="M1.500 8h22" stroke="#605e5c" stroke-width="3" stroke-linecap="round" /><path d="M1.500 8h22" stroke="#f3f2f1" stroke-width="1" /><circle cx="30.500" cy="8" r="7.500" fill="#605e5c" /></svg></div>
        <div class="well w2">Add drill-through fields here</div>
      </aside>
      <aside class="fields">
        <div class="phead"><h2>Fields</h2><svg width="10" height="16" viewBox="0 0 10 16" fill="none"><path d="M1.500 1l7 7-7 7" stroke="#3b3a39" stroke-width="1.300" /></svg></div>
        <div class="fsearch"><svg width="19" height="19" viewBox="0 0 19 19" fill="none"><circle cx="12" cy="6.800" r="5.800" stroke="#252423" stroke-width="1.300" /><path d="M8 11L1 18" stroke="#252423" stroke-width="1.400" /></svg><span>Search</span></div>
        <div class="flist">
          <div v-for="f in fields" :key="f" class="field">
            <svg width="34" height="17" viewBox="0 0 34 17" fill="none"><path d="M1.500 1.500l6.500 7-6.500 7" stroke="#605e5c" stroke-width="1.200" /><path d="M17.200 1.200h15.600v14.600H17.200z" fill="#fff" stroke="#3b3a39" stroke-width="1.300" /><path d="M17 2.500h16M17 6.500h16M17 11h16M22.500 3v13M27.500 3v13" stroke="#3b3a39" stroke-width="1.300" /></svg>
            <span>{{ f }}</span>
          </div>
        </div>
      </aside>
    </main>

    <div class="status"><span>Page 2 of 6</span><span class="upd">Update available (click to download)</span></div>

    <footer class="taskbar">
      <svg width="0" height="0" class="defs"><defs>
        <linearGradient id="gw" gradientUnits="userSpaceOnUse" x1="0" y1="0" x2="29" y2="29"><stop offset="0" stop-color="#4cc9fb" /><stop offset="1" stop-color="#0372d2" /></linearGradient>
        <linearGradient id="gk" x1="0" y1="0" x2="1" y2="1"><stop offset="0" stop-color="#4a4a48" /><stop offset="1" stop-color="#1f1f1e" /></linearGradient>
        <linearGradient id="gc" x1="0" y1="0" x2="1" y2="1"><stop offset="0" stop-color="#8e64c4" /><stop offset=".5" stop-color="#7b73d8" /><stop offset="1" stop-color="#4c50b8" /></linearGradient>
        <linearGradient id="ge1" x1="0" y1=".2" x2="1" y2=".5"><stop offset="0" stop-color="#1ba0e0" /><stop offset=".5" stop-color="#2fc5c9" /><stop offset="1" stop-color="#63dc58" /></linearGradient>
        <linearGradient id="gf" x1="0" y1="0" x2="1" y2="1"><stop offset="0" stop-color="#ffd966" /><stop offset="1" stop-color="#fbb90b" /></linearGradient>
        <linearGradient id="gp1" x1="0" y1="0" x2="0" y2="1"><stop offset="0" stop-color="#e6a90f" /><stop offset="1" stop-color="#c77d11" /></linearGradient>
        <linearGradient id="gp2" x1="0" y1="0" x2="0" y2="1"><stop offset="0" stop-color="#f4d24a" /><stop offset="1" stop-color="#e5ae10" /></linearGradient>
        <linearGradient id="gcl" x1="0" y1="0" x2="0" y2="1"><stop offset="0" stop-color="#9fb9e6" /><stop offset="1" stop-color="#e8edf7" /></linearGradient>
      </defs></svg>
      <div class="weather">
        <svg width="30" height="20" viewBox="0 0 30 20"><path d="M6 19.500Q0 19 0 13.500 1 8 6 8 8 .5 15 .5 21.500 1 23 6q7 .5 7 7 0 6-6 6.500z" fill="url(#gcl)" /><circle cx="23.500" cy="12.500" r="6" fill="#d4def2" opacity=".7" /></svg>
        <div><div>32°C</div><div class="dim">Cloudy</div></div>
      </div>
      <div class="apps">
        <div v-for="(a, i) in apps" :key="i" class="app" :class="{ on: a.on }">
          <svg width="30" height="30" viewBox="0 0 30 30" fill="none" v-html="a.svg"></svg>
          <i v-if="a.dot" class="dot"></i><i v-if="a.on" class="line"></i>
          <b v-if="a.badge" :class="{ red: a.red }">{{ a.badge }}</b>
        </div>
      </div>
      <svg class="tray1" width="56" height="16" viewBox="1562 1042 56 16" fill="none" stroke="#1b1b1b" stroke-width="1.400"><path d="M1563.500 1054l7.500-8 7.500 8" /><rect x="1597" y="1043.500" width="18.500" height="12" rx="1.500" /><path d="M1599.500 1047h14M1600.500 1049.500h12" stroke-dasharray="1.500 2" /><path d="M1600 1053h12.500" /></svg>
      <div class="lang"><div>ENG</div><div>INTL</div></div>
      <svg class="tray2" width="84" height="20" viewBox="1690 1040 84 20" fill="none" stroke="#1b1b1b" stroke-width="1.500">
        <path d="M1691.500 1048q9.500-10 19 0" stroke="#a9bcc1" /><path d="M1694.500 1050.500q6.500-6 13 0M1697.500 1053.500q3.500-3.300 7 0" /><circle cx="1701" cy="1055.300" r="1.500" fill="#1b1b1b" stroke="none" />
        <path d="M1721.500 1047h3l5-4v14l-5-4h-3zM1732 1047.500q1.500 2.500 0 5M1735 1045q3 5 0 10M1738 1043q4.500 7 0 14" stroke-width="1.300" />
        <path d="M1757 1043.500h10.500v12h-14v-4" /><path d="M1757.500 1046h8.500v7.500h-10v-4z" fill="#1b1b1b" stroke="none" /><path d="M1768.500 1047.500h2.500v4h-2.500zM1751.500 1044h6v3.500q-1.500 3-3 3t-3-3z" fill="#1b1b1b" stroke="none" /><path d="M1753 1044.500v-3.500M1756 1044.500v-3.500M1754.500 1050v6" />
      </svg>
      <div class="clock"><div class="time">08:25 AM</div><div>16-06-2022</div></div>
      <svg class="moon" width="18" height="18" viewBox="0 0 18 18" fill="none"><path d="M7.500 1Q16 1.500 16.500 9 16 16.500 9 17 3.500 17 1 13q8.500-1.500 6.500-12Z" stroke="#1b1b1b" stroke-width="1.500" /></svg>
    </footer>
  </div>
</template>

<style>
body { margin: 0; overflow: hidden; }
</style>

<style scoped>
.desk { width: 1920px; height: 1080px; overflow: hidden; display: flex; flex-direction: column; background: #f3f2f1; font-family: "Open Sans", "Noto Sans", sans-serif; color: #252423; font-size: 14px; }
.desk * { box-sizing: border-box; }
svg { flex: none; overflow: visible; display: block; }
h2, p { margin: 0; }
.titlebar { height: 43px; flex: none; background: #3b3a37; display: flex; color: #fff; }
.quick { width: 110px; }
.doc { width: 667px; padding-left: 134px; line-height: 47px; font-size: 14.4px; letter-spacing: -0.06px; white-space: nowrap; }
.tsearch { width: 585px; height: 30px; margin-top: 6px; background: #cdccca; border-radius: 2px; display: flex; align-items: center; padding-left: 23px; }
.tsearch span { color: #26304b; font-size: 16.2px; margin-left: 14px; letter-spacing: -0.1px; padding-top: 1px; }
.tsearch svg { margin-top: -1px; }
.signin { margin-left: 296px; width: 58px; line-height: 43px; font-size: 14.2px; letter-spacing: -0.05px; }
.avatar { width: 20px; height: 20px; border-radius: 50%; background: #f3f2f1; margin-top: 11px; }
.winctl { margin-left: 34px; }
.ribbon { height: 160px; flex: none; display: flex; flex-direction: column; border-bottom: 3px solid #e0dfde; }
.menus { display: flex; height: 45px; }
.menu { text-align: center; font-size: 16.5px; line-height: 40px; height: 38px; letter-spacing: -0.1px; }
.menu.on { font-weight: 600; letter-spacing: -0.45px; }
.menu.on span { display: inline-block; height: 38px; border-bottom: 3px solid #f2c811; }
.groups { display: flex; height: 112px; position: relative; }
.group { flex: none; height: 110px; border-right: 1px solid #c8c6c4; display: flex; flex-direction: column; }
.clip { width: 201px; }
.gbody { display: flex; height: 99px; flex: none; }
.rbtn { display: flex; flex-direction: column; align-items: center; padding-top: 1px; white-space: nowrap; }
.rl { font-size: 14px; line-height: 20px; height: 20px; letter-spacing: -0.12px; display: flex; align-items: center; }
.rl:nth-child(2) { margin-top: 2px; }
.off .rl { color: #b0aeac; }
.caret { margin: 4px 0 0 1.5px; }
.gname { font-size: 11.8px; text-align: center; line-height: 15px; margin-top: -3px; height: 12px; letter-spacing: -0.1px; color: #3b3a39; }
.paste { width: 65px; padding: 1px 0 0 18px; color: #a8a6a4; letter-spacing: -0.2px; }
.paste span { display: block; line-height: 20px; margin-top: 2px; }
.paste svg { margin-left: 1px; }
.cliplist { display: flex; flex-direction: column; margin-top: -1px; }
.cliplist div { display: flex; align-items: center; height: 30px; color: #b3b1af; letter-spacing: -0.02px; white-space: nowrap; }
.cliplist svg { margin-right: 3px; }
.collapse { position: absolute; left: 1902px; top: 97px; }
.work { flex: none; height: 787px; display: flex; }
.rail { width: 51px; border-right: 1px solid #e1dfdd; flex: none; }
.center { width: 1417px; flex: none; }
.canvas { height: 743px; background: #32394b; position: relative; overflow: hidden; }
.sheet { position: absolute; left: 56px; top: 3px; width: 1264px; height: 737px;
  background: repeating-linear-gradient(90deg, #fff 0 2px, transparent 2px 4px) 0 0 / 100% 2px no-repeat, repeating-linear-gradient(90deg, #fff 0 2px, transparent 2px 4px) 0 100% / 100% 2px no-repeat, repeating-linear-gradient(#fff 0 2px, transparent 2px 4px) 0 0 / 2px 100% no-repeat, repeating-linear-gradient(#fff 0 2px, transparent 2px 4px) 100% 0 / 2px 100% no-repeat; }
.nav { position: absolute; top: 33.500px; }
.nav.left { left: 61.500px; }
.nav.right { left: 1200.500px; }
.banner { position: absolute; left: 192px; top: 30px; width: 972px; height: 112px; background: #018ea3; border: 1px solid #107e92; color: #0a0a0a; font-family: Lato, "Open Sans", sans-serif; font-size: 42px; text-align: center; line-height: 93px; padding-left: 29px; letter-spacing: 1.1px; word-spacing: 3px; -webkit-text-stroke: 0.7px #0a0a0a; }
.card { position: absolute; left: 58px; width: 268px; border: 1px solid #c9ccd2; color: #fff; font-family: "Liberation Sans", Arial, sans-serif; display: flex; flex-direction: column; align-items: center; }
.card b { font-weight: 400; font-size: 36px; line-height: 36px; }
.card span { font-size: 18px; line-height: 20px; letter-spacing: 0.1px; }
.c1 { top: 175px; height: 210px; padding-top: 79px; }
.c1 span { margin-top: 7px; }
.c2 { top: 455px; height: 243px; padding-top: 96px; }
.c2 b { letter-spacing: -0.4px; }
.c2 span { margin-top: 6px; }
.barv { position: absolute; left: 348px; top: 177px; }
.linev { position: absolute; left: 883px; top: 177px; }
.frame { fill: none; stroke: #c0c3ca; stroke-width: 1; }
.grid { stroke: #dcdcde; stroke-width: 1; fill: none; }
.ax { font: 12.9px "Liberation Sans", Arial, sans-serif; fill: #fff; stroke: #fff; stroke-width: 0.3px; }
.cat { font: 15.8px "Liberation Sans", Arial, sans-serif; fill: #fff; stroke: #fff; stroke-width: 0.15px; }
.vt { font: 700 15.8px "Liberation Sans", Arial, sans-serif; fill: #d64c58; stroke: #d64c58; stroke-width: 0.7px; }
.pc { stroke-width: 0.1px; }
.tablev { position: absolute; left: 859px; top: 464px; width: 376px; color: #fff; font: 12.2px "Liberation Sans", Arial, sans-serif; }
.ttitle { margin-left: 160px; }
.tr { display: grid; grid-template-columns: 72.5px 72.5px 44.5px 85px 101.5px; height: 16.54px; line-height: 18px; white-space: nowrap; -webkit-text-stroke: 0.2px #fff; }
.tr span { padding: 0 5px 0 5px; position: relative; letter-spacing: -0.28px; }
.tr.alt { background: #424a5b; }
.tr.alt span { border-right: 1px solid #3b4355; }
.tr .n { text-align: right; letter-spacing: -0.2px; }
.th { height: 28.5px; line-height: 27.500px; border-bottom: 2px solid #06b0a6; }
.th i { position: absolute; left: 5px; bottom: 3px; border: 4px solid transparent; border-top: 0; border-bottom: 4px solid #fff; }
.tbody { height: 204.5px; overflow: hidden; }
.total { border-top: 1.5px solid #06a39c; font-weight: 700; height: 18px; line-height: 14px; -webkit-text-stroke: 0; }
.total span { padding-left: 4px; }
.scroll { position: absolute; left: 1305px; top: 489px; }
.filters { position: absolute; left: 1375px; top: 0; width: 42px; height: 743px; border-left: 1px solid #d6d6d8; color: #fff; }
.filters span { display: block; writing-mode: vertical-rl; font-weight: 600; font-size: 18px; line-height: 26px; margin: 9px 0 0 7px; letter-spacing: 0.1px; }
.tabs { height: 44px; display: flex; }
.tabnav { border-right: 1px solid #a8a6a4; }
.tab { border-right: 1px solid #c8c6c4; display: flex; align-items: center; justify-content: center; height: 44px; white-space: nowrap; font-size: 14.4px; letter-spacing: -0.07px; padding-top: 1px; padding-right: 1px; }
.tab.on { background: #fff; border-bottom: 5px solid #f2c811; padding-top: 6px; -webkit-text-stroke: 0.3px #252423; letter-spacing: -0.2px; }
.tab.hid { letter-spacing: -0.3px; padding-right: 4px; }
.tab.hid svg { margin: 6px 5px 0 0; }
.plus { width: 49px; height: 40px; margin-top: 2px; background: #f2c811; display: flex; align-items: center; justify-content: center; }
.viz { width: 227px; border-left: 1px solid #e1dfdd; border-right: 1px solid #dcdad8; flex: none; }
.phead { display: flex; justify-content: space-between; height: 63px; padding: 19px 14px 0 15px; color: #3b3a39; }
.phead h2 { font-size: 18.2px; font-weight: 600; line-height: 24px; }
.viz .phead h2 { letter-spacing: 0.05px; }
.vgrid { display: grid; grid-template-columns: repeat(6, 35px); grid-auto-rows: 30px; padding-left: 7px; height: 177px; margin-top: 1px; }
.vtabs { display: flex; height: 46px; border-top: 1px solid #dcdad8; padding-left: 15px; margin-top: -1px; }
.vtab { width: 50px; padding: 10px 0 0 12px; }
.vtab.on { border-bottom: 5px solid #f2c811; border-radius: 0 0 2px 2px; }
.vtab + .vtab { padding-left: 12.500px; }
.lab { font-size: 14px; line-height: 20px; letter-spacing: -0.1px; padding-left: 11px; }
.values { padding-left: 14.500px; margin-top: 7px; }
.well { margin-left: 5px; width: 212px; background: #fff; border: 1px dashed #b3b0ad; border-radius: 2px; white-space: nowrap; font-size: 14.3px; letter-spacing: 0.02px; }
.w1 { height: 35px; line-height: 31px; padding-left: 12px; margin-top: 7px; }
.drill { font-size: 18.5px; font-weight: 600; line-height: 24px; padding-left: 17px; margin-top: 18px; color: #3b3a39; letter-spacing: 0.1px; }
.cross { margin-top: 19px; }
.tog { display: flex; align-items: center; padding-left: 22px; height: 20px; letter-spacing: -0.3px; }
.tog span { width: 25px; line-height: 18px; padding-bottom: 2px; }
.t1 { margin-top: 17px; }
.keep { margin-top: 23px; }
.t2 { margin-top: 17px; }
.w2 { height: 33px; line-height: 31px; padding-left: 10px; margin-top: 16px; }
.fields { flex: 1; }
.fields .phead { padding-right: 13px; }
.fsearch { margin: -3px 0 0 5px; width: 215px; height: 33px; background: #fff; border: 1px solid #605e5c; border-radius: 3px; display: flex; align-items: center; padding-left: 9px; font-size: 16px; color: #3b3a39; }
.fsearch span { margin-left: 7px; padding-top: 2px; letter-spacing: -0.1px; }
.fsearch svg { margin-bottom: 3px; }
.flist { border-top: 1px solid #dcdad8; margin-top: 7px; padding-top: 12px; }
.field { display: flex; height: 29.95px; align-items: center; padding-left: 11px; font-size: 14.6px; letter-spacing: -0.25px; color: #3b3a39; }
.field span { margin-left: 6px; }
.status { height: 30px; flex: none; border-top: 1px solid #dcdad8; display: flex; justify-content: space-between; padding: 0 7px 0 6px; line-height: 30px; font-size: 14.4px; letter-spacing: 0; color: #3b3a39; }
.taskbar { height: 60px; flex: none; background: #cde7ed; display: flex; border-top: 1px solid #b9d8dc; color: #1b1b1b; position: relative; }
.defs { position: absolute; }
.weather { width: 603px; padding: 14px 0 0 26px; display: flex; line-height: 20px; font-size: 14.4px; letter-spacing: -0.15px; }
.weather svg { margin: 3px 9px 0 0; }
.weather > div { margin-top: -4px; }
.dim { color: #5b6467; }
.apps { display: flex; width: 715px; }
.app { width: 55px; height: 59px; position: relative; display: flex; justify-content: center; padding-top: 15px; }
.app.on::before { content: ""; position: absolute; left: 3px; top: 5px; width: 44px; height: 48px; border-radius: 5px; background: #e8f4f7; border: 1px solid #d9e3e6; box-shadow: 3px 0 0 #e3f0f3; }
.app svg { position: relative; }
.dot { position: absolute; width: 8px; height: 4px; border-radius: 2px; background: #768388; left: 24px; top: 49px; }
.line { position: absolute; width: 20px; height: 4px; border-radius: 2px; background: #23818f; left: 18px; top: 49px; }
.app b { position: absolute; left: 29px; top: 8px; width: 20px; height: 20px; border-radius: 50%; background: #23818f; color: #fff; font-weight: 400; font-size: 14px; line-height: 20px; text-align: center; }
.app b.red { background: #f90b0b; font-size: 16px; }
.tray1 { margin: 21px 0 0 244px; }
.lang { width: 72px; text-align: center; line-height: 20px; padding-top: 9px; letter-spacing: -0.2px; font-size: 14.2px; }
.tray2 { margin-top: 19px; }
.clock { width: 92px; text-align: right; line-height: 20px; padding-top: 9px; font-size: 14.6px; }
.time { font-size: 14.3px; }
.moon { margin: 21px 0 0 12px; }
</style>
